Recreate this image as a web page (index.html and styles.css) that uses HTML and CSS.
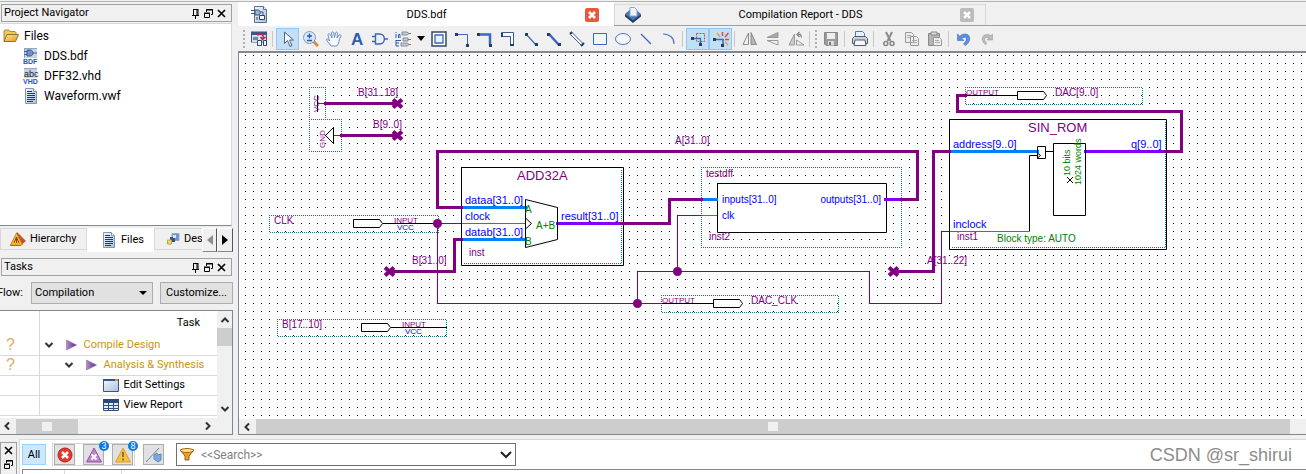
FILE: index.html
```
<!DOCTYPE html>
<html lang="en">
<head>
    <meta charset="UTF-8">
    <meta name="viewport" content="width=device-width, initial-scale=1.0">
    <title>DDS - Schematic Editor</title>
    <link rel="stylesheet" href="styles.css">
</head>
<body>
    <svg class="defs" width="0" height="0" aria-hidden="true">
        <defs>
            <linearGradient id="paper" x1="0" y1="0" x2="1" y2="1"><stop offset="0" stop-color="#f4f8fc"/><stop offset="1" stop-color="#a9c0dc"/></linearGradient>
            <linearGradient id="gold" x1="0" y1="0" x2="1" y2="1"><stop offset="0" stop-color="#ffe9a0"/><stop offset="1" stop-color="#e09a18"/></linearGradient>
            <linearGradient id="violet" x1="0" y1="0" x2="1" y2="0"><stop offset="0" stop-color="#b58ccc"/><stop offset="1" stop-color="#5a2a80"/></linearGradient>
            <symbol id="i-pin" viewBox="0 0 11 11"><path d="M3.5 1v6M3 1.5h5M7 1v6M8 1v6M2 7.5h7M5.5 8v3" fill="none" stroke="#000"/></symbol>
            <symbol id="i-restore" viewBox="0 0 11 11"><path d="M3.5 4V1.5h6v5H8M3 2h7M1.5 5.5h5v4h-5zM1 5h6" fill="none" stroke="#000"/></symbol>
            <symbol id="i-close" viewBox="0 0 11 11"><path d="M2 2l7 7M9 2l-7 7" fill="none" stroke="#000" stroke-width="1.6"/></symbol>
            <symbol id="i-doc" viewBox="0 0 16 16"><path d="M2.500.5h8l3 3v12h-11z" fill="url(#paper)" stroke="#8296b4"/><path d="M10.500.5v3h3" fill="#fff" stroke="#8296b4"/><path d="M4 3.500h5M4 5.500h8M4 7.500h8M4 9.500h8M4 11.500h8M4 13.500h6" stroke="#1c2f9c"/></symbol>
            <symbol id="i-play" viewBox="0 0 12 12"><path d="M1.500 1l10 5-10 5z" fill="url(#violet)" stroke="#8a6a9c" stroke-width=".6"/></symbol>
            <symbol id="i-down" viewBox="0 0 10 10"><path d="M1.500 3L5 6.500 8.500 3" fill="none" stroke="#333" stroke-width="2"/></symbol>
        </defs>
    </svg>

    <main class="workspace">
        <aside class="side">
            <header class="dock-title">
                <h2>Project Navigator</h2>
                <button aria-label="Pin navigator"><svg><use href="#i-pin"/></svg></button>
                <button aria-label="Float navigator"><svg><use href="#i-restore"/></svg></button>
                <button aria-label="Close navigator"><svg><use href="#i-close"/></svg></button>
            </header>
            <ul class="tree">
                <li class="root">
                    <svg width="16" height="14" viewBox="0 0 16 14"><path d="M1 12V2l1-1h4l1 1.500h5l1 1V6" fill="#f0c75c" stroke="#a8884a"/><path d="M1 12.500L4 5.500h11.500l-3 7z" fill="url(#gold)" stroke="#8f7030"/></svg>
                    Files
                </li>
                <li>
                    <svg width="16" height="16" viewBox="0 0 16 16"><path d="M1 0h13v10H1z" fill="#c5d3e8"/><path d="M1 .5h13M1.500 0v10" stroke="#8fa6c8"/><path d="M4 2h3c4 0 4 6 0 6H4zM1 3.500h3M1 6.500h3M10 5h4" fill="#7291c0" stroke="#405d94"/><text class="tag" x="0" y="16">BDF</text></svg>
                    DDS.bdf
                </li>
                <li>
                    <svg width="16" height="16" viewBox="0 0 16 16"><path d="M1 0h13v10H1z" fill="#c5d3e8"/><path d="M1 .5h13" stroke="#8fa6c8"/><text class="tag tag-dark" x="1" y="9">abc</text><text class="tag" x="0" y="16">VHD</text></svg>
                    DFF32.vhd
                </li>
                <li><svg width="16" height="16"><use href="#i-doc"/></svg> Waveform.vwf</li>
            </ul>
            <nav class="nav-tabs">
                <button class="nav-tab hierarchy">
                    <svg width="16" height="14" viewBox="0 0 16 14"><path d="M7 0l9 9-6 5H0z" fill="#c9532c"/><path d="M6.500 1l6 12H.5z" fill="#f6c336" stroke="#b07818" stroke-width=".7"/><path d="M4 11l2.500-6L9 11M6.500 5v6" fill="none" stroke="#7c4a12"/></svg>
                    Hierarchy
                </button>
                <button class="nav-tab current"><svg width="16" height="16"><use href="#i-doc"/></svg> Files</button>
                <button class="nav-tab design">
                    <svg width="13" height="12" viewBox="0 0 13 12"><path d="M5 .5h7v7H5z" fill="#6f95cc" stroke="#8ca9d0"/><path d="M3 4h5v5H3z" fill="#33537f"/><path d="M.5 7h4v4h-4z" fill="#f3d76a" stroke="#c0a040"/><path d="M6 2h3v3H6z" fill="#dbe7f6"/></svg>
                    Des
                </button>
                <button class="tab-step" aria-label="Previous tabs"><svg width="6" height="10"><path d="M6 0v10L0 5z" fill="#8c8c8c"/></svg></button>
                <button class="tab-step" aria-label="Next tabs"><svg width="6" height="10"><path d="M0 0v10l6-5z"/></svg></button>
            </nav>

            <header class="dock-title">
                <h2>Tasks</h2>
                <button aria-label="Pin tasks"><svg><use href="#i-pin"/></svg></button>
                <button aria-label="Float tasks"><svg><use href="#i-restore"/></svg></button>
                <button aria-label="Close tasks"><svg><use href="#i-close"/></svg></button>
            </header>
            <div class="flow">
                <label for="flow">Flow:</label>
                <span class="select"><select id="flow"><option>Compilation</option></select></span>
                <button>Customize...</button>
            </div>
            <section class="tasks">
                <div class="tasks-body">
                    <table>
                        <thead>
                            <tr><th></th><th>Task</th></tr>
                        </thead>
                        <tbody>
                            <tr class="pending">
                                <td>?</td>
                                <td><div class="task level-1"><svg class="chev"><use href="#i-down"/></svg><svg class="play"><use href="#i-play"/></svg>Compile Design</div></td>
                            </tr>
                            <tr class="pending">
                                <td>?</td>
                                <td><div class="task level-2"><svg class="chev"><use href="#i-down"/></svg><svg class="play"><use href="#i-play"/></svg>Analysis &amp; Synthesis</div></td>
                            </tr>
                            <tr>
                                <td></td>
                                <td><div class="task level-3"><svg width="16" height="13" viewBox="0 0 16 13"><path d="M.5.5h15v12H.5z" fill="url(#paper)" stroke="#2f5796"/><path d="M0 1h16" stroke="#2f5796" stroke-width="2"/><path d="M12 1h3" stroke="#f08030" stroke-width="2"/></svg>Edit Settings</div></td>
                            </tr>
                            <tr>
                                <td></td>
                                <td><div class="task level-3"><svg width="16" height="12" viewBox="0 0 16 12"><path d="M.5.5h15v11H.5z" fill="#e4ecf8" stroke="#34507e"/><path d="M0 0h16v4H0z" fill="#2c4878"/><path d="M0 6.500h16M0 9.500h16M5.500 4v8M10.500 4v8" stroke="#34507e"/></svg>View Report</div></td>
                            </tr>
                        </tbody>
                    </table>
                    <div class="vscroll">
                        <svg class="chev up"><use href="#i-down"/></svg>
                        <span class="thumb"></span>
                        <svg class="chev"><use href="#i-down"/></svg>
                    </div>
                </div>
                <div class="hscroll">
                    <svg class="chev left"><use href="#i-down"/></svg>
                    <span class="thumb"></span>
                    <svg class="chev right"><use href="#i-down"/></svg>
                </div>
            </section>
        </aside>

        <section class="editor">
            <nav class="doc-tabs">
                <div class="doc-tab active">
                    <svg width="17" height="17" viewBox="0 0 17 17"><path d="M3.500.5h9l3 3v13h-12z" fill="url(#paper)" stroke="#5a7294"/><path d="M12.500.5v3h3" fill="#fff" stroke="#5a7294"/><path d="M0 4.500h7M0 7.500h4M9 6h3v3" fill="none" stroke="#3b5680"/><path d="M4 4h3c3 0 3 5 0 5H4z" fill="#9cb6d8" stroke="#3b5680"/><path d="M8.500 9.500h5v4h-5zM6 11v3" fill="#fff" stroke="#2e4668"/></svg>
                    <span>DDS.bdf</span>
                    <button class="close" aria-label="Close DDS.bdf"><svg width="14" height="14"><path d="M4 4l6 6M10 4l-6 6" stroke="#fff" stroke-width="2.500"/></svg></button>
                </div>
                <div class="doc-tab">
                    <svg width="16" height="16" viewBox="0 0 16 16"><path d="M8 0l8 7-8 7.500L0 7z" fill="#4a76b0"/><path d="M8 13.500L0 7v2.500L8 16l8-6.500V7z" fill="#1d3a64"/><path d="M5 .5h4.500l2.500 2.500V9H5z" fill="#eef4fc" stroke="#8ba6ca"/></svg>
                    <span>Compilation Report - DDS</span>
                    <button class="close" aria-label="Close Compilation Report"><svg width="14" height="14"><path d="M4 4l6 6M10 4l-6 6" stroke="#fff" stroke-width="2.500"/></svg></button>
                </div>
            </nav>

            <div class="toolbar">
                <span class="grip"></span>
                <button aria-label="Detach window"><svg viewBox="0 0 16 16"><path d="M0 .5h16v11H0z" fill="#3d5785"/><path d="M1 4h14v7H1z" fill="#d5deeb"/><path d="M2 6h5v3H2z" fill="#7188ae"/><path d="M6 4c5-2 7 0 6 4M9.500 6l2 2.500L14.500 6" fill="none" stroke="#d02040" stroke-width="1.500"/><path d="M6.500 9.500h4v5h-4zM12.500 9.500h3v5h-3z" fill="#eef3fb" stroke="#2f4468"/></svg></button>
                <i class="sep"></i>
                <button class="on" aria-label="Selection tool"><svg viewBox="0 0 16 16"><path d="M4.500 1v11.500l3-3 2.500 6 2-1-2.500-5.500h4z" fill="#f6f9fd" stroke="#49648f"/></svg></button>
                <button aria-label="Zoom"><svg viewBox="0 0 16 16"><path d="M10 10l5 5" stroke="#d68c3c" stroke-width="3"/><circle cx="6.500" cy="6.500" r="6" fill="#d7e7f7" stroke="#7a9ac4"/><path d="M4 5h5M6.500 2.500v5M4 9.500h5" stroke="#2858a8" stroke-width="1.300"/></svg></button>
                <button aria-label="Hand"><svg viewBox="0 0 16 16"><path d="M5 15l-4.500-6c0-2 2-1 3 1L2 4c0-2 2-1.500 2.500 0L6 7 5.500 2c.2-1.500 2-1.500 2.200 0L8.500 6.500l1-4.500c.5-1.500 2-1 2 .3L11 7l2-3c1-1 2.500 0 1.800 1.200C13 8 13 13 11 15z" fill="#f7f9fc" stroke="#6f8fc0"/></svg></button>
                <button aria-label="Text"><svg viewBox="0 0 16 16"><text class="glyph-a" x="2" y="14">A</text></svg></button>
                <button aria-label="Symbol"><svg viewBox="0 0 16 16"><path d="M3.500 3h4c6.500 0 6.500 10 0 10h-4zM0 5.500h3M0 10.500h3M12.500 8H16" fill="#eaf1fa" stroke="#3c66b0" stroke-width="1.400"/></svg></button>
                <button aria-label="Pin tool"><svg viewBox="0 0 16 16"><path d="M10 2.500h6M10 8.500h6M10 13.500h6" stroke="#e05050"/><path d="M7 1h5l2 1.500L12 4H7zM8 7h5v3H8zM6 12h6l2 1.500-2 1.500H6z" fill="#c8ced8" stroke="#6f7885" stroke-width=".8"/><path d="M1 1v1M1 3v4M3.500 7V3.500h1.500V7M1 9.500h5M1 12h3M1 15h3M1 9v6" fill="none" stroke="#2d5cb0"/></svg></button>
                <button class="more" aria-label="More pins"><svg viewBox="0 0 8 5"><path d="M0 0h8L4 5z"/></svg></button>
                <button aria-label="Block tool"><svg viewBox="0 0 16 16"><path d="M1 1h14v14H1z" fill="#fff" stroke="#34495e" stroke-width="1.500"/><path d="M4 4h8v8H4z" fill="#edf3fc" stroke="#3c66c0" stroke-width="1.300"/></svg></button>
                <button aria-label="Orthogonal node"><svg viewBox="0 0 16 16"><path d="M2 3.500h11.500V14" fill="none" stroke="#3c66c0"/><path d="M1 2h3v3H1zM12 13h3v3h-3z" fill="#24405e"/></svg></button>
                <button aria-label="Orthogonal bus"><svg viewBox="0 0 16 16"><path d="M2 3.500h11V14" fill="none" stroke="#3c66c0" stroke-width="2.500"/><path d="M0 2h3v3H0zM12 13h3v3h-3z" fill="#24405e"/></svg></button>
                <button aria-label="Orthogonal conduit"><svg viewBox="0 0 16 16"><path d="M1.500 1.500h12v13h-3v-9h-9z" fill="#fff" stroke="#3c5a90"/><path d="M1 2h2v4H1zM10 13h4v2h-4z" fill="#24405e"/></svg></button>
                <button aria-label="Diagonal node"><svg viewBox="0 0 16 16"><path d="M3 3l10 11" stroke="#3c66c0" stroke-width="1.200"/><path d="M2 2h3v3H2zM12 12h3v3h-3z" fill="#24405e"/></svg></button>
                <button aria-label="Diagonal bus"><svg viewBox="0 0 16 16"><path d="M3 3l10 11" stroke="#3c66c0" stroke-width="2.500"/><path d="M1 2h3v3H1zM12 12h3v3h-3z" fill="#24405e"/></svg></button>
                <button aria-label="Diagonal conduit"><svg viewBox="0 0 16 16"><path d="M3 1.500L14.500 13 13 15 1.500 3.500z" fill="#fff" stroke="#3c5a90"/><path d="M1 3l2-2M12 15l3-3" stroke="#24405e" stroke-width="2"/></svg></button>
                <button aria-label="Rectangle"><svg viewBox="0 0 16 16"><path d="M1.500 2.500h13v11h-13z" fill="#f3f6fc" stroke="#3c66c0"/></svg></button>
                <button aria-label="Oval"><svg viewBox="0 0 16 16"><ellipse cx="8" cy="8" rx="7.500" ry="5.500" fill="#f3f6fc" stroke="#5577c4"/></svg></button>
                <button aria-label="Line"><svg viewBox="0 0 16 16"><path d="M3 3l10 10" stroke="#3c66c0" stroke-width="1.300"/></svg></button>
                <button aria-label="Arc"><svg viewBox="0 0 16 16"><path d="M2 3c7 0 11 4 11 10" fill="none" stroke="#5577c4" stroke-width="1.200"/></svg></button>
                <i class="sep"></i>
                <button class="on" aria-label="Rubberbanding"><svg viewBox="0 0 16 16"><path d="M6.500 2.500h8v8h-8z" fill="none" stroke="#e04848" stroke-dasharray="2 1"/><path d="M2 7.500h8.500V14" fill="none" stroke="#3c66c0" stroke-width="1.300"/><path d="M1 6h3v3H1zM9 12h3v3H9z" fill="#24405e"/></svg></button>
                <button class="on" aria-label="Partial line selection"><svg viewBox="0 0 16 16"><path d="M2 8.500h8V15" fill="none" stroke="#3c66c0" stroke-width="1.500"/><path d="M0 7h3v3H0zM8 13h3v3H8z" fill="#24405e"/><path d="M9.500 1v4M12 6l3.500-4M12 8.500h4" stroke="#e04830" stroke-width="1.500"/><path d="M7 6L4 2M12 11l3 3" stroke="#f0a030" stroke-width="1.500"/></svg></button>
                <i class="sep"></i>
                <button aria-label="Flip horizontal"><svg viewBox="0 0 16 16"><path d="M6.500 2v11.500H1z" fill="none" stroke="#8a8a8a"/><path d="M9 1.500l5.500 12H9z" fill="#b5b5b5" stroke="#8a8a8a"/></svg></button>
                <button aria-label="Flip vertical"><svg viewBox="0 0 16 16"><path d="M13 1.500v5H2z" fill="#a8a8a8" stroke="#999"/><path d="M13 14V9.500H2z" fill="none" stroke="#999"/></svg></button>
                <button aria-label="Rotate left"><svg viewBox="0 0 16 16"><path d="M6.500 3v11H1z" fill="#ccc" stroke="#999"/><path d="M8.500 9v5H16z" fill="none" stroke="#999"/><path d="M9 3.500h3.500l1 3M11.500 1L9 3.500 11.500 6" fill="none" stroke="#888" stroke-width="1.300"/></svg></button>
                <i class="sep"></i>
                <span class="grip"></span>
                <button aria-label="Save"><svg viewBox="0 0 16 16"><path d="M1.500 1.500h13v13H3l-1.500-1.500z" fill="#9c9c9c" stroke="#888"/><path d="M4 2h8v6H4z" fill="#eee"/><path d="M5 10h6v4.500H5z" fill="#ddd"/><path d="M6 11h2v3H6z" fill="#777"/></svg></button>
                <i class="sep"></i>
                <button aria-label="Print"><svg viewBox="0 0 16 16"><path d="M3.500.5h7l2 2V8h-9z" fill="#e8f1fd" stroke="#4a7ccc"/><path d="M.5 7.500l2-2h11l2 2v5H.5z" fill="#ccd0d6" stroke="#555d68"/><path d="M3 9h10l1 5.500H2z" fill="#f5f7fa" stroke="#555d68"/></svg></button>
                <i class="sep"></i>
                <button aria-label="Cut"><svg viewBox="0 0 16 16"><path d="M5 1l4.500 9M11 1L6.500 10" stroke="#8c8c8c" stroke-width="2"/><circle cx="4.800" cy="12.500" r="2" fill="none" stroke="#888" stroke-width="1.500"/><circle cx="11" cy="12.500" r="2" fill="none" stroke="#888" stroke-width="1.500"/></svg></button>
                <button aria-label="Copy"><svg viewBox="0 0 16 16"><path d="M1.500 1.500h6l2 2v8h-8zM6.500 5.500h6l2 2v7h-8z" fill="#ececec" stroke="#999"/><path d="M3 4.500h4M3 6.500h3M8 9.500h5M8 11.500h5" stroke="#aaa"/></svg></button>
                <button aria-label="Paste"><svg viewBox="0 0 16 16"><path d="M1.500 2.500h11v12h-11z" fill="#b4b4b4" stroke="#888"/><path d="M4 1h6v3H4z" fill="#ddd" stroke="#888"/><path d="M6.500 6.500h6l2 2v6h-8z" fill="#eee" stroke="#999"/><path d="M8 9.500h4M8 11.500h5" stroke="#aaa"/></svg></button>
                <i class="sep"></i>
                <button aria-label="Undo"><svg viewBox="0 0 16 16"><path d="M1.500 3v6.500H8L5.800 7.300c3-2.300 5.700-.8 4.200 2.700L7.500 13l2 1.500c6-4 5.500-11.500-.5-11.500-2 0-3.800.8-5.200 2.200z" fill="#5c8fe0" stroke="#3a6cc4" stroke-width=".6"/></svg></button>
                <button aria-label="Redo"><svg viewBox="0 0 16 16"><path d="M13.500 3v6H8l2-2C7 5.500 4.500 7 6 10l2 2.500-1.500 1C1.500 10 2.500 3.500 8 3.500c1.800 0 3 .5 4 1.300z" fill="#bcbcbc" stroke="#a0a0a0" stroke-width=".6"/></svg></button>
            </div>

            <div class="canvas">
                <svg class="schematic" width="1067" height="365" viewBox="239 53 1067 365">
                    <!-- selection outlines -->
                    <g class="bounds">
                        <path d="M309.500 87.500h16v32h-16zM309.500 119.500h32v32h-32z"/>
                        <path d="M269.500 215.500h169v17h-169zM277.500 319.500h169v17h-169z"/>
                        <path d="M661.500 295.500h177v17h-177zM965.500 87.500h177v17h-177z"/>
                        <path d="M701.500 167.500h200v80h-200z"/>
                    </g>
                    <!-- blocks -->
                    <g class="outline block">
                        <path d="M461.500 167.500h162v98h-162z"/>
                        <path d="M717.500 183.500h169v49h-169z"/>
                        <path d="M949.500 119.500h217v130h-217z"/>
                    </g>
                    <path class="bounds" d="M621.500 168.500v95H462.500M1165.500 120.500v127H950.500"/>

                    <!-- single wires -->
                    <path class="wire" d="M437.500 223.500h24M437.500 223.500v80h224M637.500 303.500v-32h232v32h72v-72h8M677.500 271.500v-56h24"/>
                    <path class="pin-in" d="M462 223.500h63M702 215.500h15M950 231.500h79"/>
                    <path class="pin-out" d="M318 103.500h7M334 135.500h7"/>

                    <!-- buses -->
                    <g class="bus">
                        <path d="M324 103.500h73M340 135.500h57"/>
                        <path d="M463 207.500h-25.500v-56h480v48H899"/>
                        <path d="M390 271.500h64.500v-32H463"/>
                        <path d="M619 223.500h50.500v-24H703"/>
                        <path d="M893 271.500h40.500v-120H951"/>
                        <path d="M967 95.500h-9.500v16h224v40H1164"/>
                    </g>
                    <path class="bus-in" d="M463 207.500h64M463 239.500h64M703 199.500h15M951 151.500h88"/>
                    <path class="bus-out" d="M556 223.500h64M884 199.500h16M1084 151.500h80"/>
                    <path class="cross" d="M393 99.500l9 8M402 99.500l-9 8M393 131.500l9 8M402 131.500l-9 8M385 267.500l9 8M394 267.500l-9 8M889 267.500l9 8M898 267.500l-9 8"/>

                    <!-- symbols -->
                    <g class="outline block">
                        <path d="M353.500 219.500h26l3 4-3 4h-26z"/>
                        <path d="M361.500 323.500h26l3 4-3 4h-26z"/>
                        <path d="M713.500 299.500h26l3 4-3 4h-26z"/>
                        <path d="M1017.500 91.500h26l3 4-3 4h-26z"/>
                        <path d="M333.500 127.500v16l-8-8z"/>
                    </g>
                    <g class="outline">
                        <path d="M317.500 95v17M383 223.500h51M391 327.500h56M662 303.500h51M967 95.500h50"/>
                        <path d="M525.500 199.500l32 8v32l-32 8zM525.500 218l6 5.500-6 5.500"/>
                        <path d="M1037.500 146.500h8v12h-8zM1045.500 151.500h8M1053.500 143.500h32v72h-32z"/>
                        <path d="M1029.500 231.500v-76h8M1037.500 153l3 2.500-3 2.500M1067 177l6 6M1073 177l-6 6"/>
                    </g>
                    <g class="joint">
                        <circle cx="437.500" cy="223.500" r="4.500"/>
                        <circle cx="637.500" cy="303.500" r="4.500"/>
                        <circle cx="677.500" cy="271.500" r="4.500"/>
                    </g>

                    <g class="net">
                        <text x="358" y="96">B[31..18]</text>
                        <text x="373" y="128">B[9..0]</text>
                        <text x="412" y="264">B[31..0]</text>
                        <text x="282" y="328">B[17..10]</text>
                        <text x="675" y="144">A[31..0]</text>
                        <text x="927" y="264">A[31..22]</text>
                        <text x="1055" y="96">DAC[9..0]</text>
                        <text x="751" y="304">DAC_CLK</text>
                        <text x="274" y="224">CLK</text>
                        <text x="706" y="177">testdff</text>
                        <text x="709" y="240">inst2</text>
                        <text x="469" y="256">inst</text>
                        <text x="957" y="240">inst1</text>
                    </g>
                    <g class="kind">
                        <text x="394" y="223">INPUT</text>
                        <text x="402" y="327">INPUT</text>
                        <text x="662" y="303">OUTPUT</text>
                        <text x="966" y="95">OUTPUT</text>
                        <text transform="translate(319 112) rotate(-90)">VCC</text>
                        <text transform="translate(325 148) rotate(-90)">GND</text>
                        <text class="level" x="397" y="230">VCC</text>
                        <text class="level" x="405" y="334">VCC</text>
                    </g>
                    <g class="title">
                        <text x="517" y="180">ADD32A</text>
                        <text x="1028" y="132">SIN_ROM</text>
                    </g>
                    <g class="port">
                        <text x="465" y="204">dataa[31..0]</text>
                        <text x="465" y="220">clock</text>
                        <text x="465" y="236">datab[31..0]</text>
                        <text x="561" y="220">result[31..0]</text>
                        <text x="953" y="148">address[9..0]</text>
                        <text x="953" y="228">inclock</text>
                        <text x="1131" y="148">q[9..0]</text>
                    </g>
                    <g class="port small">
                        <text x="722" y="203">inputs[31..0]</text>
                        <text x="722" y="219">clk</text>
                        <text x="881" y="203" text-anchor="end">outputs[31..0]</text>
                    </g>
                    <g class="note">
                        <text x="525" y="213">A</text>
                        <text x="525" y="245">B</text>
                        <text x="536" y="229">A+B</text>
                        <text x="997" y="242">Block type: AUTO</text>
                        <text class="side-note" transform="translate(1070 176) rotate(-90)">10 bits</text>
                        <text class="side-note" transform="translate(1081 185) rotate(-90)">1024 words</text>
                    </g>
                </svg>
            </div>
            <div class="hscroll wide">
                <svg class="chev left"><use href="#i-down"/></svg>
                <span class="thumb"></span>
            </div>
        </section>
    </main>

    <footer class="messages">
        <div class="gutter">
            <button aria-label="Close messages"><svg><use href="#i-close"/></svg></button>
            <button aria-label="Float messages"><svg><use href="#i-restore"/></svg></button>
        </div>
        <div class="message-pane">
            <div class="filters">
                <button class="all">All</button>
                <div class="filter-group">
                    <button class="filter" aria-label="Errors"><svg viewBox="0 0 16 16"><circle cx="8" cy="8" r="7" fill="#e8352c" stroke="#b8201c"/><path d="M5 5l6 6M11 5l-6 6" stroke="#fff" stroke-width="2.500"/></svg></button>
                    <button class="filter" aria-label="Critical warnings"><svg viewBox="0 0 16 16"><path d="M8 1l7.500 14H.5z" fill="#c084d0" stroke="#9450a8"/><path d="M5.500 7.500l5 5M10.500 7.500l-5 5" stroke="#fff" stroke-width="2"/></svg><span class="count">3</span></button>
                    <button class="filter" aria-label="Warnings"><svg viewBox="0 0 16 16"><path d="M8 1l7.500 14H.5z" fill="#fbc13a" stroke="#e09a28"/><path d="M8 5v5M8 11.500v2" stroke="#7a6a50" stroke-width="1.800"/></svg><span class="count">8</span></button>
                </div>
                <button class="filter" aria-label="Flagged messages"><svg viewBox="0 0 16 16"><path d="M0 15L13 1" stroke="#66809c"/><path d="M8 8l3-2 1 2 3-1v6l-3 2-4-3z" fill="#7ca6de" stroke="#5f88c0"/></svg></button>
                <div class="search">
                    <svg width="14" height="14" viewBox="0 0 14 14"><path d="M0 2h14l-5 6v4H5V8z" fill="#f0a020" stroke="#9a6420"/><ellipse cx="7" cy="2.500" rx="6.500" ry="2" fill="#ffe07a" stroke="#9a6420"/></svg>
                    <input type="text" placeholder="&lt;&lt;Search&gt;&gt;" aria-label="Search messages">
                    <button aria-label="Search history"><svg width="12" height="8"><path d="M1 1l5 5 5-5" fill="none" stroke="#222" stroke-width="2"/></svg></button>
                </div>
                <span class="watermark">CSDN @sr_shirui</span>
            </div>
            <div class="message-head"><span></span><span></span></div>
        </div>
    </footer>
</body>
</html>
```
FILE: styles.css
```
:root {
    --face: #f0f0f0;
    --line: #828790;
    --soft-line: #d9d9d9;
    --bus: #800080;
    --pin-in: #0080ff;
    --pin-out: #8000ff;
}

* {
    box-sizing: border-box;
}

body {
    margin: 0;
    height: 100vh;
    overflow: hidden;
    display: flex;
    flex-direction: column;
    background: var(--face);
    color: #000;
    font: 11px/16px Roboto, "Noto Sans", sans-serif;
}

button,
select,
input {
    font: inherit;
    color: inherit;
    margin: 0;
    padding: 0;
    border: 0;
    background: none;
    border-radius: 0;
}

svg {
    display: block;
    flex: none;
}

.defs {
    position: absolute;
}

.workspace {
    flex: 1;
    min-height: 0;
    display: flex;
    gap: 5px;
    border-top: 1px solid #b4b4b4;
    margin-top: 1px;
}

/* left docks */
.side {
    width: 233px;
    flex: none;
    display: flex;
    flex-direction: column;
    padding-top: 2px;
}

.dock-title {
    display: flex;
    align-items: center;
    height: 18px;
    flex: none;
    margin: 0 1px;
    padding: 0 3px 0 2px;
    border: 1px solid #a0a0a0;
}

.dock-title h2 {
    flex: 1;
    margin: 0;
    font-size: 11px;
    font-weight: normal;
}

.dock-title button {
    width: 13px;
    height: 13px;
    display: grid;
    place-items: center;
}

.dock-title svg,
.gutter svg {
    width: 11px;
    height: 11px;
}

.tree {
    flex: 1;
    min-height: 0;
    list-style: none;
    margin: 1px 1px 2px 0;
    padding: 2px 0 0;
    background: #fff;
    border-top: 1px solid var(--soft-line);
    border-right: 1px solid var(--soft-line);
    border-bottom: 1px solid var(--line);
    font-size: 12px;
}

.tree li {
    display: flex;
    align-items: center;
    gap: 5px;
    height: 20px;
    padding-left: 23px;
}

.tree .root {
    padding-left: 3px;
}

.tag {
    font: bold 7px "Liberation Sans", sans-serif;
    fill: #2c50b8;
}

.tag-dark {
    font: 9px "Liberation Sans", sans-serif;
    fill: #222;
}

.nav-tabs {
    display: flex;
    align-items: flex-start;
    flex: none;
    height: 24px;
    margin-bottom: 6px;
}

.nav-tab {
    display: flex;
    align-items: center;
    gap: 4px;
    height: 22px;
    border: 1px solid var(--soft-line);
    white-space: nowrap;
}

.nav-tab.hierarchy {
    width: 87px;
    padding-left: 9px;
}

.nav-tab.current {
    width: 67px;
    height: 24px;
    padding-left: 13px;
    background: #fff;
    border-color: #fff;
}

.nav-tab.design {
    width: 48px;
    padding-left: 12px;
    border-right: 0;
}

.tab-step {
    display: grid;
    place-items: center;
    width: 15px;
    height: 24px;
    border: 1px solid #fff;
    border-right-color: #555;
    border-bottom-color: #888;
}

.tab-step:last-child {
    width: 16px;
}

.flow {
    display: flex;
    align-items: center;
    height: 22px;
    flex: none;
    margin: 6px 0;
}

.flow label {
    width: 31px;
    margin-left: -3px;
}

.select {
    position: relative;
    width: 122px;
    margin: 0 7px 0 3px;
}

.select::after {
    content: "";
    position: absolute;
    right: 6px;
    top: 9px;
    border: 4px solid transparent;
    border-top-color: #000;
    pointer-events: none;
}

.select select {
    appearance: none;
    width: 100%;
    height: 22px;
    padding-left: 3px;
    background: #e1e1e1;
    border: 1px solid #adadad;
}

.flow button {
    flex: 1;
    height: 22px;
    background: #e1e1e1;
    border: 1px solid #adadad;
}

.tasks {
    flex: none;
    background: #fff;
    border: 1px solid var(--line);
    border-left: 0;
}

.tasks-body {
    display: flex;
    height: 107px;
    overflow: hidden;
}

.tasks table {
    flex: 1;
    align-self: flex-start;
    border-collapse: collapse;
    table-layout: fixed;
}

.tasks th {
    height: 24px;
    padding: 0 17px 0 0;
    font-weight: normal;
    text-align: right;
}

.tasks th:first-child,
.tasks td:first-child {
    width: 39px;
    padding: 0 0 0 6px;
    border-right: 1px solid var(--soft-line);
}

.tasks td {
    height: 20px;
    padding: 0;
    border-bottom: 1px solid var(--soft-line);
}

.pending {
    color: #c8960c;
}

.pending td:first-child {
    color: #dcae62;
    font: 16px/16px "Liberation Sans", sans-serif;
}

.task {
    display: flex;
    align-items: center;
    height: 19px;
    white-space: nowrap;
}

.level-1 {
    padding-left: 4px;
}

.level-2 {
    padding-left: 24px;
}

.level-3 {
    gap: 5px;
    padding-left: 63px;
}

.chev {
    width: 10px;
    height: 10px;
}

.play {
    width: 12px;
    height: 12px;
    margin: 0 7px 0 11px;
}

.up {
    transform: rotate(180deg);
}

.left {
    transform: rotate(90deg);
}

.right {
    transform: rotate(-90deg);
}

.vscroll {
    width: 15px;
    display: flex;
    flex-direction: column;
    align-items: center;
    padding: 4px 0;
    background: var(--face);
}

.vscroll .thumb {
    width: 15px;
    height: 18px;
    margin: 3px 0 auto;
    background: #cdcdcd;
}

.hscroll {
    display: flex;
    align-items: center;
    height: 16px;
    background: var(--face);
}

.hscroll .left {
    margin: 0 4px 0 2px;
}

.hscroll .thumb {
    display: grid;
    place-items: center;
    width: 62px;
    height: 15px;
    background: #cdcdcd;
}

.hscroll .thumb::before {
    content: "";
    width: 10px;
    height: 9px;
    background: var(--face);
}

.hscroll .right {
    margin: 0 19px 0 auto;
}

.hscroll.wide {
    border-bottom: 1px solid var(--line);
    border-left: 1px solid var(--line);
}

.hscroll.wide .left {
    margin-left: 3px;
}

.hscroll.wide .thumb {
    flex: 1;
    margin-right: 16px;
}

/* editor */
.editor {
    flex: 1;
    min-width: 0;
    display: flex;
    flex-direction: column;
}

.doc-tabs {
    display: flex;
    flex: none;
    height: 24px;
    border-bottom: 1px solid #a0a0a0;
}

.doc-tab {
    display: flex;
    align-items: center;
    width: 372px;
    margin-top: 2px;
    padding: 0 11px 0 10px;
    border: 1px solid var(--soft-line);
    border-bottom: 0;
}

.doc-tab.active {
    width: 376px;
    height: 24px;
    margin-top: 0;
    padding: 0 14px 0 12px;
    background: #fff;
    border-color: #fff;
}

.doc-tab span {
    flex: 1;
    text-align: center;
}

.close {
    background: #bcbcbc;
    border-radius: 2px;
}

.active .close {
    background: #e8593c;
}

.toolbar {
    display: flex;
    align-items: center;
    flex: none;
    height: 27px;
    padding-left: 3px;
    border-bottom: 2px solid var(--line);
}

.toolbar button {
    display: grid;
    place-items: center;
    width: 23px;
    height: 22px;
}

.toolbar button svg {
    width: 16px;
    height: 16px;
}

.toolbar .on {
    background: #c2dff5;
    border: 1px solid #90c8f6;
}

.toolbar .more {
    width: 13px;
}

.toolbar .more svg {
    width: 8px;
    height: 5px;
}

.glyph-a {
    font: bold 17px "Liberation Sans", sans-serif;
    fill: #2f5cae;
}

.grip {
    width: 2px;
    height: 18px;
    margin: 0 2px;
    background: repeating-linear-gradient(#b0b0b0 0 2px, transparent 2px 4px);
}

.sep {
    width: 1px;
    height: 16px;
    margin: 0 3px 0 2px;
    background: #c8c8c8;
}

/* 8px snap grid */
.canvas {
    flex: 1;
    min-height: 0;
    overflow: hidden;
    border-left: 1px solid var(--line);
    background: #fff conic-gradient(from 0deg at 1px 1px, transparent 75%, #000 0) 6px 2px / 8px 8px;
}

.schematic {
    font-family: "Liberation Sans", sans-serif;
    fill: none;
}

.bounds {
    stroke: #008080;
    stroke-dasharray: 1 1;
    stroke-dashoffset: 0.5;
    shape-rendering: crispEdges;
}

.outline {
    stroke: #000;
    fill: none;
}

.block {
    fill: #fff;
}

.wire {
    stroke: var(--bus);
}

.pin-in {
    stroke: var(--pin-in);
}

.pin-out {
    stroke: var(--pin-out);
}

.bus,
.bus-in,
.bus-out {
    stroke: var(--bus);
    stroke-width: 3;
}

.cross {
    stroke: var(--bus);
    stroke-width: 4;
}

.bus-in {
    stroke: var(--pin-in);
}

.bus-out {
    stroke: var(--pin-out);
}

.joint {
    fill: var(--bus);
}

.net {
    font-size: 10px;
    fill: #800080;
}

.kind {
    font-size: 8px;
    fill: #800080;
}

.kind .level {
    fill: #0000ff;
}

.title {
    font-size: 13px;
    fill: #800080;
}

.port {
    font-size: 11px;
    fill: #0000ff;
}

.port.small {
    font-size: 10px;
}

.note {
    font-size: 10px;
    fill: #008000;
}

.side-note {
    font-size: 9px;
}

/* messages */
.messages {
    flex: none;
    display: flex;
    gap: 2px;
    height: 35px;
    margin-top: 4px;
    overflow: hidden;
}

.gutter {
    display: flex;
    flex-direction: column;
    align-items: center;
    width: 17px;
    margin-top: 3px;
    padding-top: 2px;
    gap: 3px;
    border: 1px solid #a0a0a0;
    border-bottom: 0;
}

.message-pane {
    flex: 1;
    background: #fff;
    border-top: 1px solid var(--soft-line);
    border-left: 1px solid var(--soft-line);
}

.filters {
    display: flex;
    align-items: center;
    height: 29px;
    padding: 0 14px 0 2px;
}

.all {
    width: 24px;
    height: 21px;
    background: #cce8ff;
    border: 1px solid #99d1ff;
}

.filter-group {
    display: flex;
    gap: 8px;
    margin: 0 8px 0 6px;
    padding: 0 1px;
    border: 1px solid var(--soft-line);
}

.filter {
    position: relative;
    display: grid;
    place-items: center;
    width: 21px;
    height: 21px;
    background: #e1e1e1;
    border: 1px solid #adadad;
}

.filter svg {
    width: 16px;
    height: 16px;
}

.count {
    position: absolute;
    top: -4px;
    right: -6px;
    width: 10px;
    height: 10px;
    border-radius: 50%;
    background: #0a78e0;
    color: #fff;
    font-size: 9px;
    line-height: 10px;
    text-align: center;
}

.search {
    display: flex;
    align-items: center;
    width: 340px;
    height: 23px;
    margin-left: 12px;
    padding: 0 3px;
    border: 1px solid #707070;
}

.search input {
    flex: 1;
    min-width: 0;
    padding-left: 7px;
    font-size: 12px;
    outline: none;
}

.search input::placeholder {
    color: #808080;
}

.watermark {
    margin-left: auto;
    color: #8c8c8c;
    font: 18px/24px "Liberation Sans", sans-serif;
}

.message-head {
    display: flex;
    height: 8px;
    margin-left: 2px;
    border-top: 1px solid var(--line);
    border-left: 1px solid var(--line);
}

.message-head span {
    width: 42px;
    border-right: 1px solid var(--soft-line);
}

.message-head span + span {
    width: 57px;
}
```
